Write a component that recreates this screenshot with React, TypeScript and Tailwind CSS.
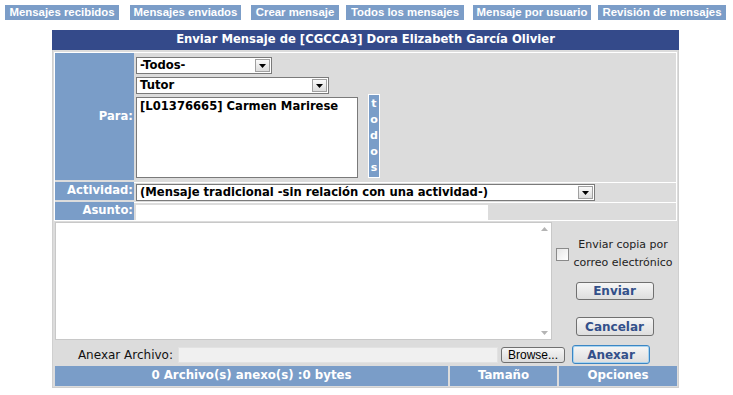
import React from "react";

const V = { fontFamily: '"DejaVu Sans", Verdana, sans-serif' };
const A = { fontFamily: '"Liberation Sans", Arial, sans-serif' };

function Arrow() {
  return (
    <div className="absolute right-[1px] top-[1px] bottom-[1px] w-[15px] border border-[#a0a0a0] bg-gradient-to-b from-[#fafafa] to-[#dcdcdc] flex items-center justify-center">
      <svg width="7" height="4" viewBox="0 0 7 4"><path d="M0 0h7L3.5 4z" fill="#000" /></svg>
    </div>
  );
}

function Select({ w, text }: { w: string; text: string }) {
  return (
    <div className={`relative ${w} h-[17px] bg-white border border-[#7a7a7a] text-[11.6px] font-bold text-black leading-[15px] pl-[3px] whitespace-nowrap`} style={V}>
      {text}
      <Arrow />
    </div>
  );
}

function Btn({ children, w, focus }: { children: React.ReactNode; w: string; focus?: boolean }) {
  return (
    <div
      className={`${w} flex items-center justify-center rounded-[3px] border ${focus ? "border-[#3c86c4] shadow-[inset_0_0_0_1px_#a8d4f0]" : "border-[#707070]"} bg-gradient-to-b from-[#f6f6f6] to-[#dedede] text-[12px] font-bold text-[#33508a]`}
      style={V}
    >
      {children}
    </div>
  );
}

function Tab({ children, cls }: { children: React.ReactNode; cls: string }) {
  return (
    <div className={`shrink-0 whitespace-nowrap h-[15px] bg-[#7b9dc8] text-white text-[11.4px] font-bold leading-[15px] flex items-center justify-center ${cls}`} style={A}>
      {children}
    </div>
  );
}

export default function App() {
  return (
    <div className="w-[733px] h-[395px] bg-white overflow-hidden">
      <div className="flex pt-[5px] pl-[5px]">
        <Tab cls="w-[114px]">Mensajes recibidos</Tab>
        <Tab cls="w-[111px] ml-[11px]">Mensajes enviados</Tab>
        <Tab cls="w-[88px] ml-[10px]">Crear mensaje</Tab>
        <Tab cls="w-[118px] ml-[7px]">Todos los mensajes</Tab>
        <Tab cls="w-[118px] ml-[9px]">Mensaje por usuario</Tab>
        <Tab cls="w-[128px] ml-[7px]">Revisión de mensajes</Tab>
      </div>

      <div className="ml-[52px] mt-[10px] w-[627px]">
        <div className="h-[20px] bg-[#344a8a] text-white text-[11.6px] font-bold flex items-center justify-center" style={V}>
          Enviar Mensaje de [CGCCA3] Dora Elizabeth García Olivier
        </div>

        <div className="bg-[#dcdcdc] border border-[#cfcfcf] border-t-0 pt-[2px] px-[1px] pb-[1px]">
          {/* upper box */}
          <div className="border border-white flex flex-col gap-[2px]">
            {/* Para */}
            <div className="flex h-[127px]">
              <div className="w-[79px] bg-[#7a9dc8] text-white text-[11.6px] font-bold flex items-center justify-end pr-[1px]" style={V}>
                Para:
              </div>
              <div className="flex-1 pl-[2px] pt-[4px] flex flex-col gap-[3px]">
                <Select w="w-[136px]" text="-Todos-" />
                <Select w="w-[193px]" text="Tutor" />
                <div className="flex items-start">
                  <div className="w-[222px] h-[81px] bg-white border border-[#7a7a7a] text-[11.6px] font-bold text-black pl-[3px] pt-[1px] leading-[15px] whitespace-nowrap" style={V}>
                    [L01376665] Carmen Marirese
                  </div>
                  <div className="ml-[10px] -mt-[3px] w-[12px] h-[84px] bg-[#7a9dc8] border border-white text-white text-[11px] font-bold flex flex-col items-center pt-[1px] leading-[16px]" style={V}>
                    <span>t</span><span>o</span><span>d</span><span>o</span><span>s</span>
                  </div>
                </div>
              </div>
            </div>
            {/* Actividad */}
            <div className="flex h-[18px]">
              <div className="w-[79px] bg-[#7a9dc8] text-white text-[11.6px] font-bold flex items-center justify-end pr-[1px]" style={V}>
                Actividad:
              </div>
              <div className="flex-1 pl-[2px] pt-[1px] border-t border-white">
                <Select w="w-[459px]" text="(Mensaje tradicional -sin relación con una actividad-)" />
              </div>
            </div>
            {/* Asunto */}
            <div className="flex h-[18px]">
              <div className="w-[79px] bg-[#7a9dc8] text-white text-[11.6px] font-bold flex items-center justify-end pr-[1px]" style={V}>
                Asunto:
              </div>
              <div className="flex-1 pl-[2px] pt-[2px] border-t border-white">
                <div className="w-[352px] h-[15px] bg-white" />
              </div>
            </div>
          </div>

          {/* lower section */}
          <div className="flex mt-[1px] pl-[1px]">
            <div className="relative w-[497px] h-[118px] bg-white border border-[#c8c8c8]">
              <svg className="absolute right-[3px] top-[4px]" width="7" height="4" viewBox="0 0 7 4"><path d="M0 4h7L3.5 0z" fill="#b4b4b4" /></svg>
              <svg className="absolute right-[3px] bottom-[4px]" width="7" height="4" viewBox="0 0 7 4"><path d="M0 0h7L3.5 4z" fill="#b4b4b4" /></svg>
            </div>
            <div className="flex-1 flex flex-col items-center">
              <div className="flex items-center mt-[14px] w-full pl-[4px]">
                <div className="w-[13px] h-[13px] border border-[#8a8a8a] bg-gradient-to-br from-[#e6e6e6] to-[#ffffff] shrink-0" />
                <div className="flex-1 text-center text-[11px] text-[#222] leading-[18px]" style={V}>
                  Enviar copia por<br />correo electrónico
                </div>
              </div>
              <div className="mt-[10px] h-[18px] flex">
                <Btn w="w-[78px]">Enviar</Btn>
              </div>
              <div className="mt-[17px] h-[19px] flex">
                <Btn w="w-[78px]">Cancelar</Btn>
              </div>
            </div>
          </div>

          {/* anexar */}
          <div className="flex items-center h-[21px] mt-[4px]">
            <div className="w-[124px] text-right text-[12px] text-[#111] pr-[5px] whitespace-nowrap" style={V}>
              Anexar Archivo:
            </div>
            <div className="w-[320px] h-[16px] bg-[#f0f0f0] border border-[#e2e2e2]" />
            <div className="ml-[3px] w-[64px] h-[16px] rounded-[3px] border border-[#707070] bg-gradient-to-b from-[#f6f6f6] to-[#dcdcdc] text-[12px] text-black flex items-center justify-center" style={A}>
              Browse...
            </div>
            <div className="ml-[7px] h-[19px] flex">
              <Btn w="w-[78px]" focus>Anexar</Btn>
            </div>
          </div>

          {/* footer */}
          <div className="flex gap-[2px] h-[20px] mt-[1px] pl-[1px] text-white text-[11.8px] font-bold" style={V}>
            <div className="w-[393px] bg-[#7a9dc8] flex items-center justify-center">0 Archivo(s) anexo(s) :0 bytes</div>
            <div className="w-[107px] bg-[#7a9dc8] flex items-center justify-center">Tamaño</div>
            <div className="flex-1 bg-[#7a9dc8] flex items-center justify-center">Opciones</div>
          </div>
        </div>
      </div>
    </div>
  );
}
